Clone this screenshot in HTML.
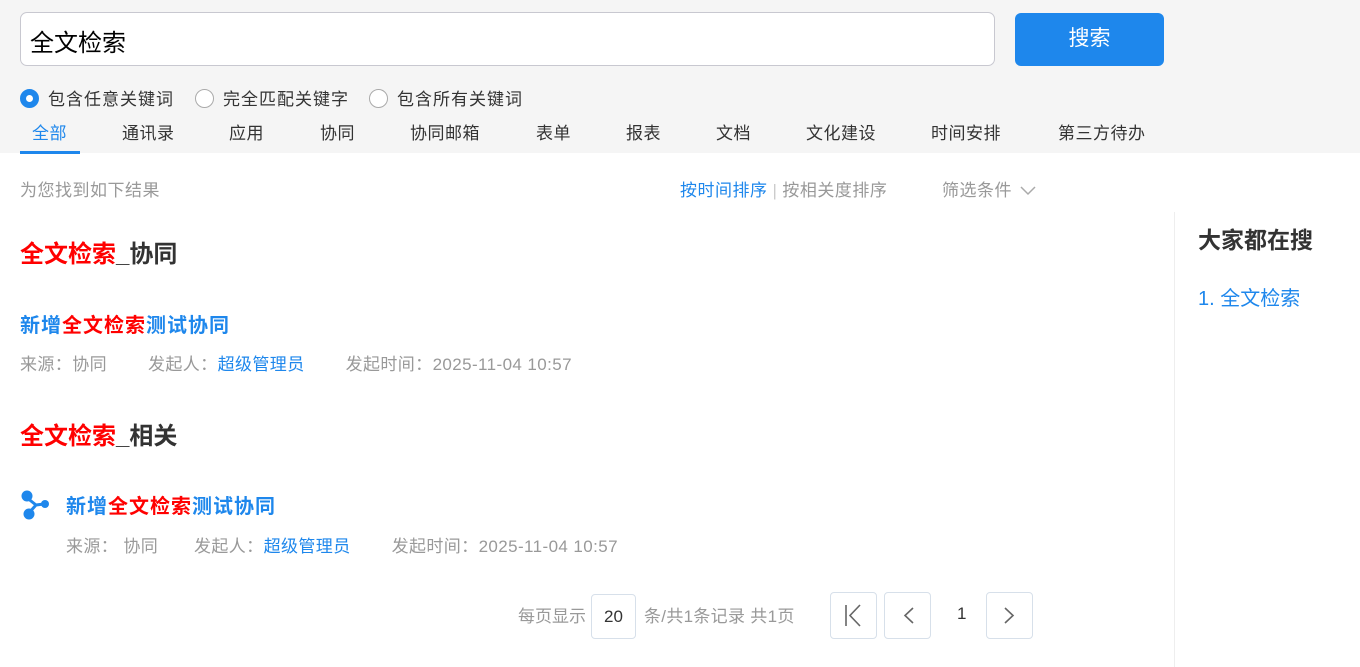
<!DOCTYPE html><html><head><meta charset="utf-8"><style>
*{margin:0;padding:0;box-sizing:border-box}
body{width:1360px;height:667px;overflow:hidden;background:#fff;font-family:"Liberation Sans","Noto Sans CJK SC",sans-serif;position:relative;color:#333}
.a{position:absolute;white-space:nowrap}
.top{position:absolute;left:0;top:0;width:1360px;height:153px;background:#f5f5f5}
.inp{left:20px;top:12px;width:975px;height:54px;background:#fff;border:1px solid #c8c8d0;border-radius:7px;font-size:24px;color:#000;padding:10px 0 0 9px}
.btn{left:1015px;top:13px;width:149px;height:53px;background:#1e87ec;border-radius:6px;color:#fff;font-size:21px;text-align:center;line-height:51px}
.r{font-size:17px;color:#333;top:85px;letter-spacing:1px}
.rc{position:absolute;top:89px;width:19px;height:19px;border-radius:50%;border:1px solid #aaa;background:#fff}
.tab{top:119px;font-size:17px;color:#333;letter-spacing:.5px}
.blue{color:#1e87ec}.red{color:#f00}
.h{font-size:24px;font-weight:bold;color:#333}
.t{font-size:20px;font-weight:bold;color:#1e87ec;letter-spacing:1px}
.m{font-size:17px;color:#999;letter-spacing:.4px}
.pb{position:absolute;top:592px;width:47px;height:47px;border:1px solid #d7e0ea;border-radius:4px;background:#fff}
</style></head><body>
<div class="top"></div>
<div class="a inp">全文检索</div>
<div class="a btn">搜索</div>
<div class="rc" style="left:20px;background:#1e87ec;border-color:#1e87ec"><div style="position:absolute;left:5px;top:5px;width:7px;height:7px;border-radius:50%;background:#fff"></div></div>
<div class="a r" style="left:48px">包含任意关键词</div>
<div class="rc" style="left:195px"></div>
<div class="a r" style="left:223px">完全匹配关键字</div>
<div class="rc" style="left:369px"></div>
<div class="a r" style="left:397px">包含所有关键词</div>
<div class="a tab blue" style="left:32px">全部</div>
<div class="a" style="left:20px;top:151px;width:60px;height:3px;background:#1e87ec"></div>
<div class="a tab" style="left:122px">通讯录</div>
<div class="a tab" style="left:229px">应用</div>
<div class="a tab" style="left:320px">协同</div>
<div class="a tab" style="left:410px">协同邮箱</div>
<div class="a tab" style="left:536px">表单</div>
<div class="a tab" style="left:626px">报表</div>
<div class="a tab" style="left:716px">文档</div>
<div class="a tab" style="left:806px">文化建设</div>
<div class="a tab" style="left:931px">时间安排</div>
<div class="a tab" style="left:1058px">第三方待办</div>
<div class="a" style="left:20px;top:176px;font-size:17px;color:#999;letter-spacing:.5px">为您找到如下结果</div>
<div class="a" style="left:680px;top:176px;font-size:17px;color:#999;letter-spacing:.5px"><span class="blue">按时间排序</span><span style="color:#ccc;margin:0 5px">|</span>按相关度排序</div>
<div class="a" style="left:942px;top:176px;font-size:17px;color:#999;letter-spacing:.5px">筛选条件 <svg width="18" height="10" viewBox="0 0 18 10" style="margin-left:2px"><path d="M2 1l7 7 7-7" fill="none" stroke="#aaa" stroke-width="1.5"/></svg></div>
<div class="a" style="left:1174px;top:212px;width:1px;height:455px;background:#eee"></div>
<div class="a h" style="left:1198px;top:221px;font-size:23px">大家都在搜</div>
<div class="a blue" style="left:1198px;top:282px;font-size:20px">1. 全文检索</div>
<div class="a h" style="left:20px;top:234px"><span class="red">全文检索</span>_协同</div>
<div class="a t" style="left:20px;top:309px">新增<span class="red">全文检索</span>测试协同</div>
<div class="a m" style="left:20px;top:350px">来源：协同&nbsp;&nbsp;&nbsp;&nbsp;&nbsp;&nbsp;&nbsp;&nbsp;发起人：<span class="blue">超级管理员</span>&nbsp;&nbsp;&nbsp;&nbsp;&nbsp;&nbsp;&nbsp;&nbsp;发起时间：2025-11-04 10:57</div>
<div class="a h" style="left:20px;top:416px"><span class="red">全文检索</span>_相关</div>
<svg class="a" style="left:20px;top:490px" width="32" height="30" viewBox="0 0 32 30"><path d="M6 7L16 15M8 24L16 15M16 15L24 14" stroke="#1e87ec" stroke-width="3"/><circle cx="7" cy="6" r="5.5" fill="#1e87ec"/><circle cx="9" cy="24" r="5.5" fill="#1e87ec"/><circle cx="25" cy="14" r="4" fill="#1e87ec"/></svg>
<div class="a t" style="left:66px;top:490px">新增<span class="red">全文检索</span>测试协同</div>
<div class="a m" style="left:66px;top:532px">来源：&nbsp;协同&nbsp;&nbsp;&nbsp;&nbsp;&nbsp;&nbsp;&nbsp;发起人：<span class="blue">超级管理员</span>&nbsp;&nbsp;&nbsp;&nbsp;&nbsp;&nbsp;&nbsp;&nbsp;发起时间：2025-11-04 10:57</div>
<div class="a m" style="left:518px;top:602px;font-size:17px;letter-spacing:0">每页显示</div>
<div class="pb" style="left:591px;top:594px;width:45px;height:45px;text-align:center;line-height:43px;font-size:17px;color:#333">20</div>
<div class="a m" style="left:644px;top:602px;font-size:17px;letter-spacing:.3px">条/共1条记录 共1页</div>
<div class="pb" style="left:830px"><svg width="45" height="45" viewBox="0 0 45 45"><path d="M15 12v21M29 12l-10 10.5 10 10.5" fill="none" stroke="#666" stroke-width="1.6"/></svg></div>
<div class="pb" style="left:884px"><svg width="45" height="45" viewBox="0 0 45 45"><path d="M28 15l-8 7.5 8 7.5" fill="none" stroke="#666" stroke-width="1.6"/></svg></div>
<div class="a" style="left:957px;top:604px;font-size:17px;color:#333">1</div>
<div class="pb" style="left:986px"><svg width="45" height="45" viewBox="0 0 45 45"><path d="M18 15l8 7.5-8 7.5" fill="none" stroke="#666" stroke-width="1.6"/></svg></div>
</body></html>
